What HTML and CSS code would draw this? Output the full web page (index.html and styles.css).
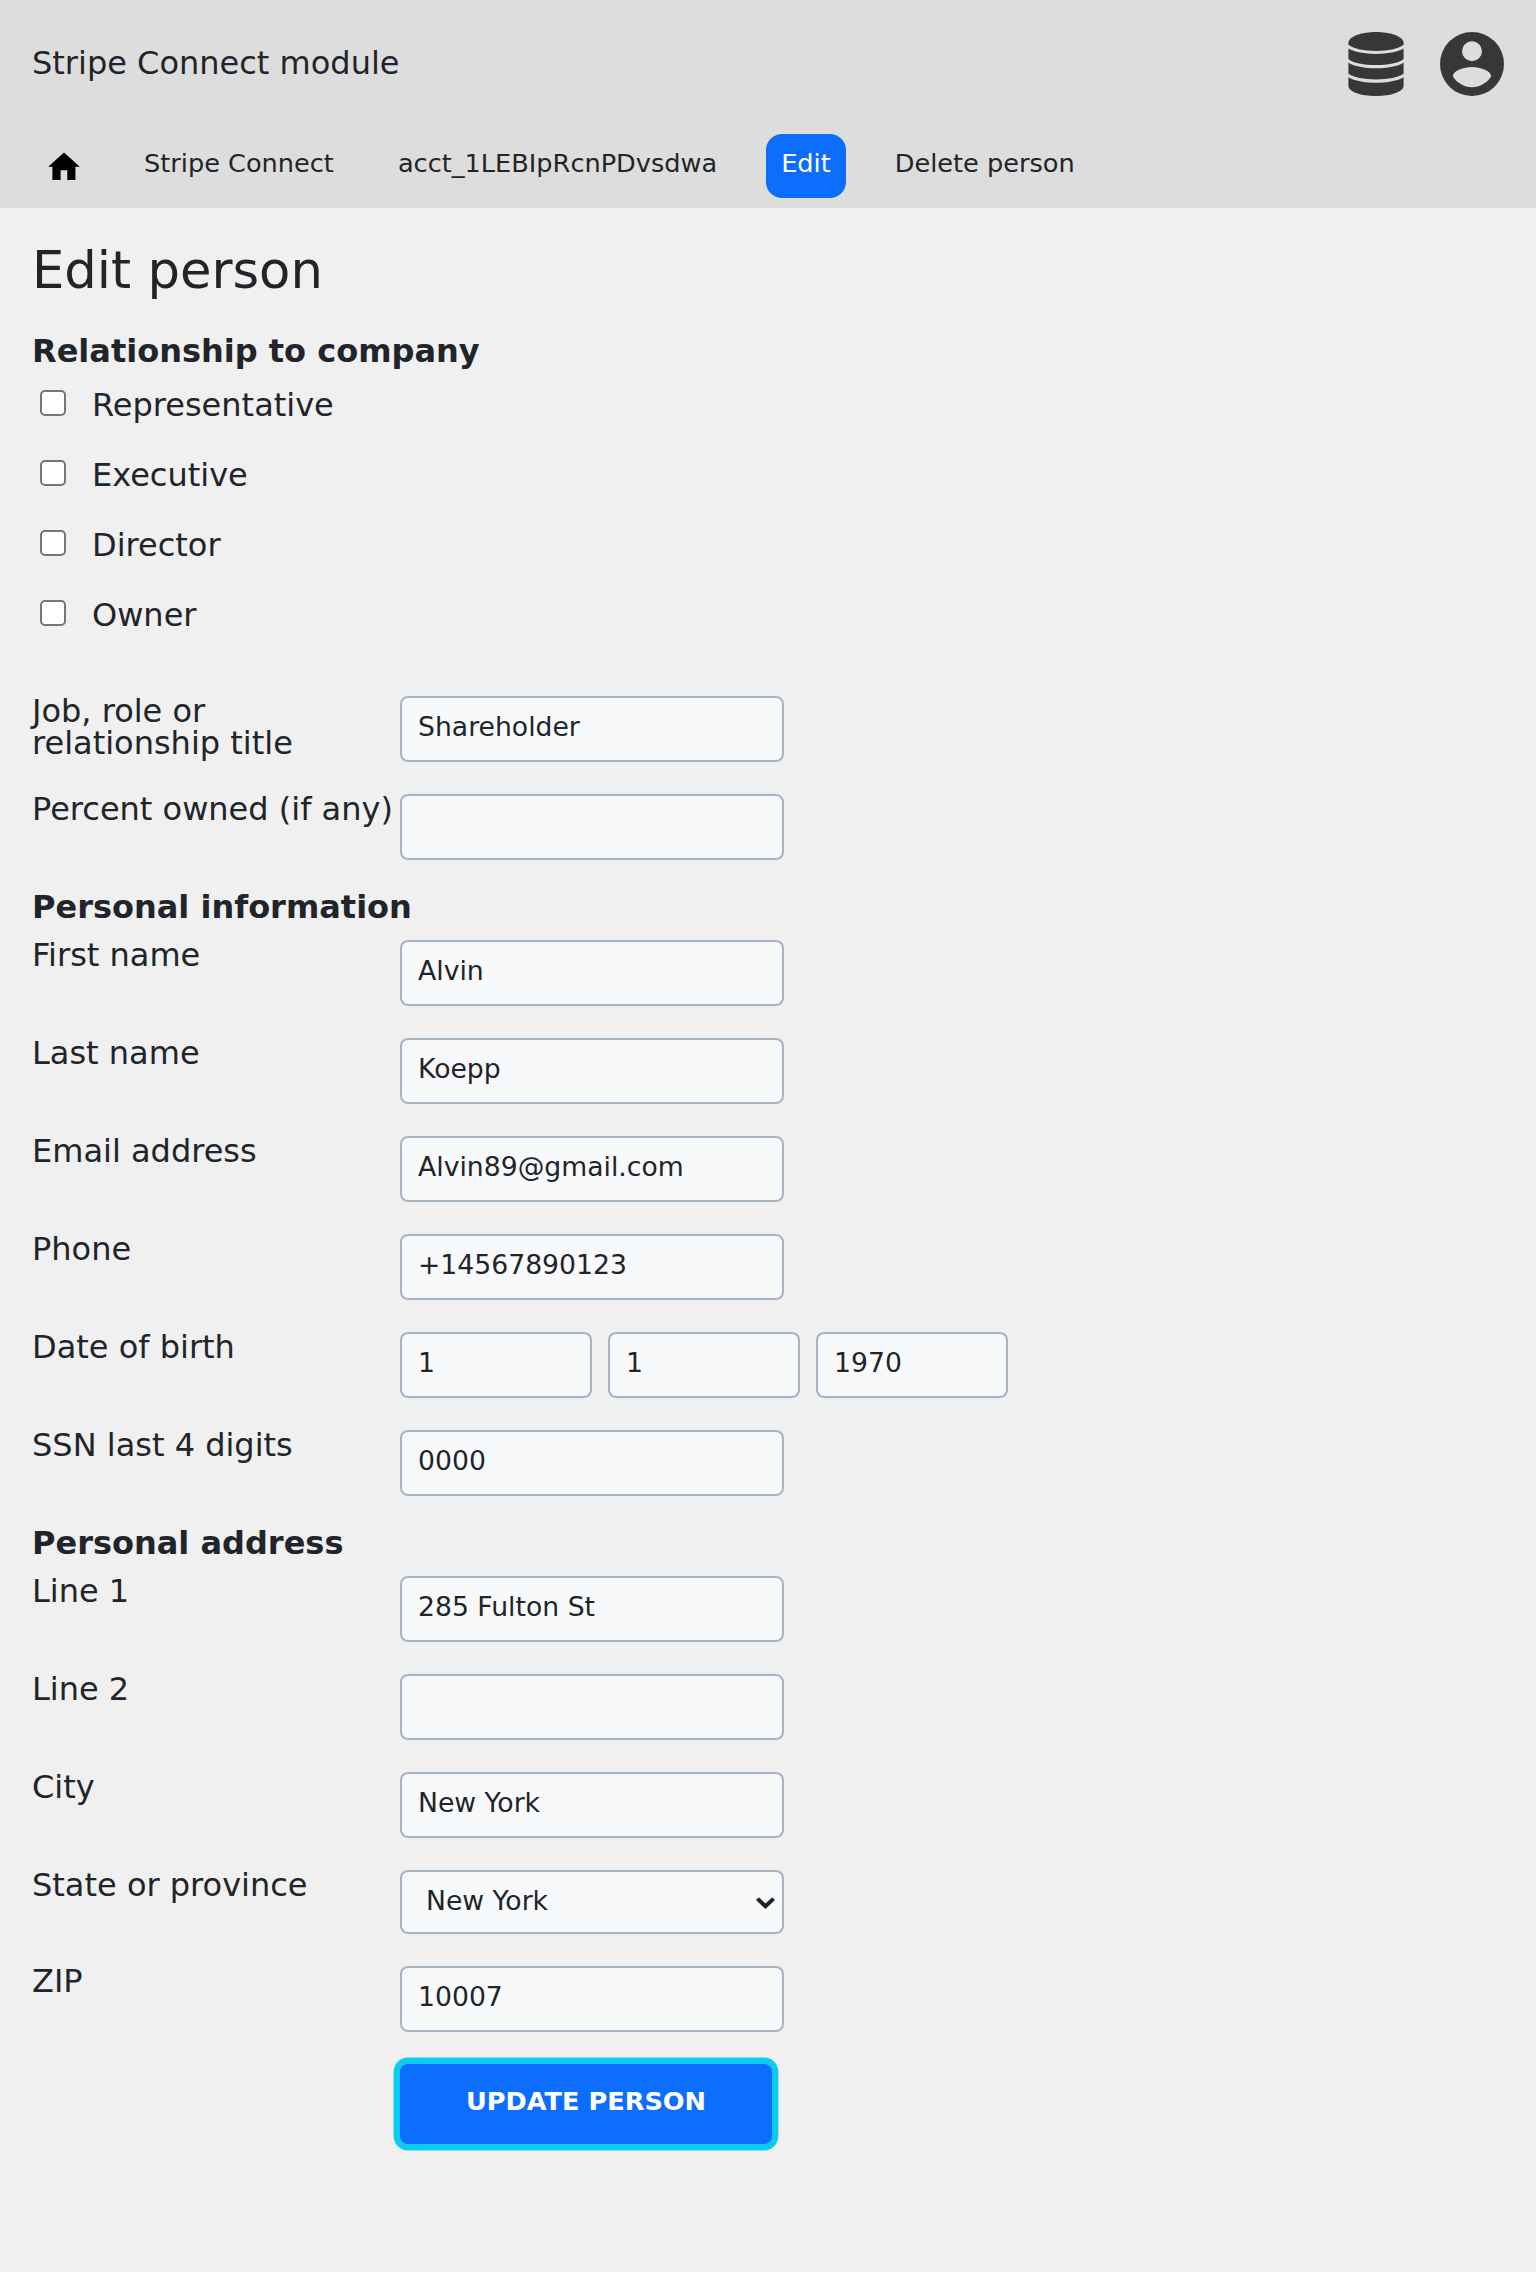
FILE: index.html
```
<!DOCTYPE html>
<html lang="en">
<head>
<meta charset="utf-8">
<title>Edit person</title>
<link rel="stylesheet" href="styles.css">
</head>
<body>
<header class="header">
  <div class="topbar">
    <div class="brand">Stripe Connect module</div>
    <div class="menus">
      <svg class="icon-db" viewBox="0 0 56 64" fill="#373737">
        <path d="M.4 10.500C1.500 4 14 0 28 0s26.500 4 27.600 10.500v2.300C50 17 40 18.900 28 18.900S6 17 .4 12.800z"/>
        <path d="M.4 16.500C6 20 17 21.900 28 21.900S50 20 55.600 16.500V27C51 31 40 33 28 33S5 31 .4 27z"/>
        <path d="M.4 30.800C6 34.400 17 36.300 28 36.300S50 34.400 55.600 30.800V41.500C51 45.500 40 47.400 28 47.400S5 45.500 .4 41.500z"/>
        <path d="M.4 45.200C6 48.800 17 50.700 28 50.700S50 48.800 55.600 45.200V54C55 60 43 64 28 64S1 60 .4 54z"/>
      </svg>
      <svg class="icon-user" viewBox="0 0 64 64" fill="#373737" fill-rule="evenodd">
        <path d="M32 0a32 32 0 1 1 0 64a32 32 0 1 1 0-64zM32 9.200a10 10 0 1 0 0 20a10 10 0 1 0 0-20zM12.800 44.200C16.500 50.500 24 55.200 32 55.200S47.500 50.500 51.200 44.200C50.800 38.500 40 35 32 35S13.200 38.500 12.800 44.200z"/>
      </svg>
    </div>
  </div>
  <nav class="nav">
    <a class="nav-item nav-home"><svg class="icon-home" viewBox="0 0 32 28"><path d="M16 .4L31.800 14.700H27.400V28H19.300V18.200H12.600V28H4.400V14.700H.2z"/></svg></a>
    <a class="nav-item">Stripe Connect</a>
    <a class="nav-item">acct_1LEBIpRcnPDvsdwa</a>
    <a class="nav-item current">Edit</a>
    <a class="nav-item">Delete person</a>
  </nav>
</header>
<main class="content">
  <h1 class="title">Edit person</h1>
  <form class="form">
    <h2 class="legend">Relationship to company</h2>
    <div class="checks">
      <label class="check"><input class="box" type="checkbox">Representative</label>
      <label class="check"><input class="box" type="checkbox">Executive</label>
      <label class="check"><input class="box" type="checkbox">Director</label>
      <label class="check"><input class="box" type="checkbox">Owner</label>
    </div>
    <div class="row"><label class="label">Job, role or<br>relationship title</label><input class="field" value="Shareholder"></div>
    <div class="row"><label class="label">Percent owned (if any)</label><input class="field"></div>
    <h2 class="legend">Personal information</h2>
    <div class="row"><label class="label">First name</label><input class="field" value="Alvin"></div>
    <div class="row"><label class="label">Last name</label><input class="field" value="Koepp"></div>
    <div class="row"><label class="label">Email address</label><input class="field" value="Alvin89@gmail.com"></div>
    <div class="row"><label class="label">Phone</label><input class="field" value="+14567890123"></div>
    <div class="row"><label class="label">Date of birth</label><div class="dates"><input class="field short" value="1"><input class="field short" value="1"><input class="field short" value="1970"></div></div>
    <div class="row"><label class="label">SSN last 4 digits</label><input class="field" value="0000"></div>
    <h2 class="legend">Personal address</h2>
    <div class="row"><label class="label">Line 1</label><input class="field" value="285 Fulton St"></div>
    <div class="row"><label class="label">Line 2</label><input class="field"></div>
    <div class="row"><label class="label">City</label><input class="field" value="New York"></div>
    <div class="row"><label class="label">State or province</label><div class="select-wrap"><select class="field select"><option>New York</option></select><svg class="arrow" viewBox="0 0 19 12"><path d="M1.400 1.600L9.500 9.300L17.600 1.600" fill="none" stroke="#212529" stroke-width="4"/></svg></div></div>
    <div class="row"><label class="label">ZIP</label><input class="field" value="10007"></div>
    <button class="submit" type="button">UPDATE PERSON</button>
  </form>
</main>
</body>
</html>
```
FILE: styles.css
```
* { box-sizing: border-box; }
body {
  margin: 0;
  min-height: 2272px;
  background: #f0f0f0;
  color: #212529;
  font: 32px/32px "DejaVu Sans", sans-serif;
}
.header { height: 208px; background: #ddd; }
.topbar {
  display: flex;
  justify-content: space-between;
  height: 134px;
  padding: 32px 32px 0;
}
.brand { padding-top: 15px; }
.menus { display: flex; gap: 36px; }
.icon-db { width: 56px; height: 64px; }
.icon-user { width: 64px; height: 64px; }
.nav {
  display: flex;
  gap: 34px;
  padding-left: 32px;
  font-size: 25.6px;
}
.nav-item {
  height: 64px;
  padding: 13px 15px 0;
  border-radius: 16px;
}
.nav-home { width: 63px; padding: 18px 0 0 16px; }
.icon-home { display: block; width: 32px; height: 28px; }
.current { background: #0d6efd; color: #fff; }
.content { padding: 32px; }
.title { margin: 0; padding-top: 4px; font-size: 51.2px; line-height: 52px; font-weight: 400; }
.form { display: flex; flex-direction: column; }
.legend { margin: 0 0 22px; font-size: 32px; line-height: 32px; font-weight: 700; }
.title + .form > .legend:first-child { margin: 39px 0 19px; }
.checks { display: flex; flex-direction: column; gap: 44px; padding-left: 8px; margin: 3px 0 71px; }
.check { display: flex; align-items: flex-start; height: 26px; line-height: 32px; gap: 26px; }
.box {
  appearance: none;
  flex: none;
  width: 26px;
  height: 26px;
  margin: 1px 0 0;
  border: 2px solid #767676;
  border-radius: 5px;
  background: #fff;
}
.row { display: flex; align-items: flex-start; margin-bottom: 32px; }
.label { width: 368px; flex: none; margin-top: -1px; height: 33px; white-space: nowrap; }
.row + .legend { margin-top: -1px; margin-bottom: 17px; }
.field {
  width: 384px;
  height: 66px;
  margin: 0;
  padding: 0 16px 6px;
  border: 2px solid #a5b4c2;
  border-radius: 8px;
  background: #f8f9fb;
  color: #212529;
  font: 26.667px "DejaVu Sans", sans-serif;
}
.dates { display: flex; gap: 16px; }
.short { width: 192px; }
.select-wrap { position: relative; height: 64px; }
.select { appearance: none; height: 64px; padding: 0 16px 4px 24px; }
.arrow { position: absolute; right: 9px; top: 27px; width: 19px; height: 12px; }
.submit {
  width: 372px;
  height: 80px;
  margin-left: 368px;
  padding: 0 0 6px;
  border: 0;
  border-radius: 8px;
  background: #0d6efd;
  box-shadow: 0 0 0 6.4px #0dcaf0;
  color: #fff;
  font: 700 25.6px "DejaVu Sans", sans-serif;
}
```
